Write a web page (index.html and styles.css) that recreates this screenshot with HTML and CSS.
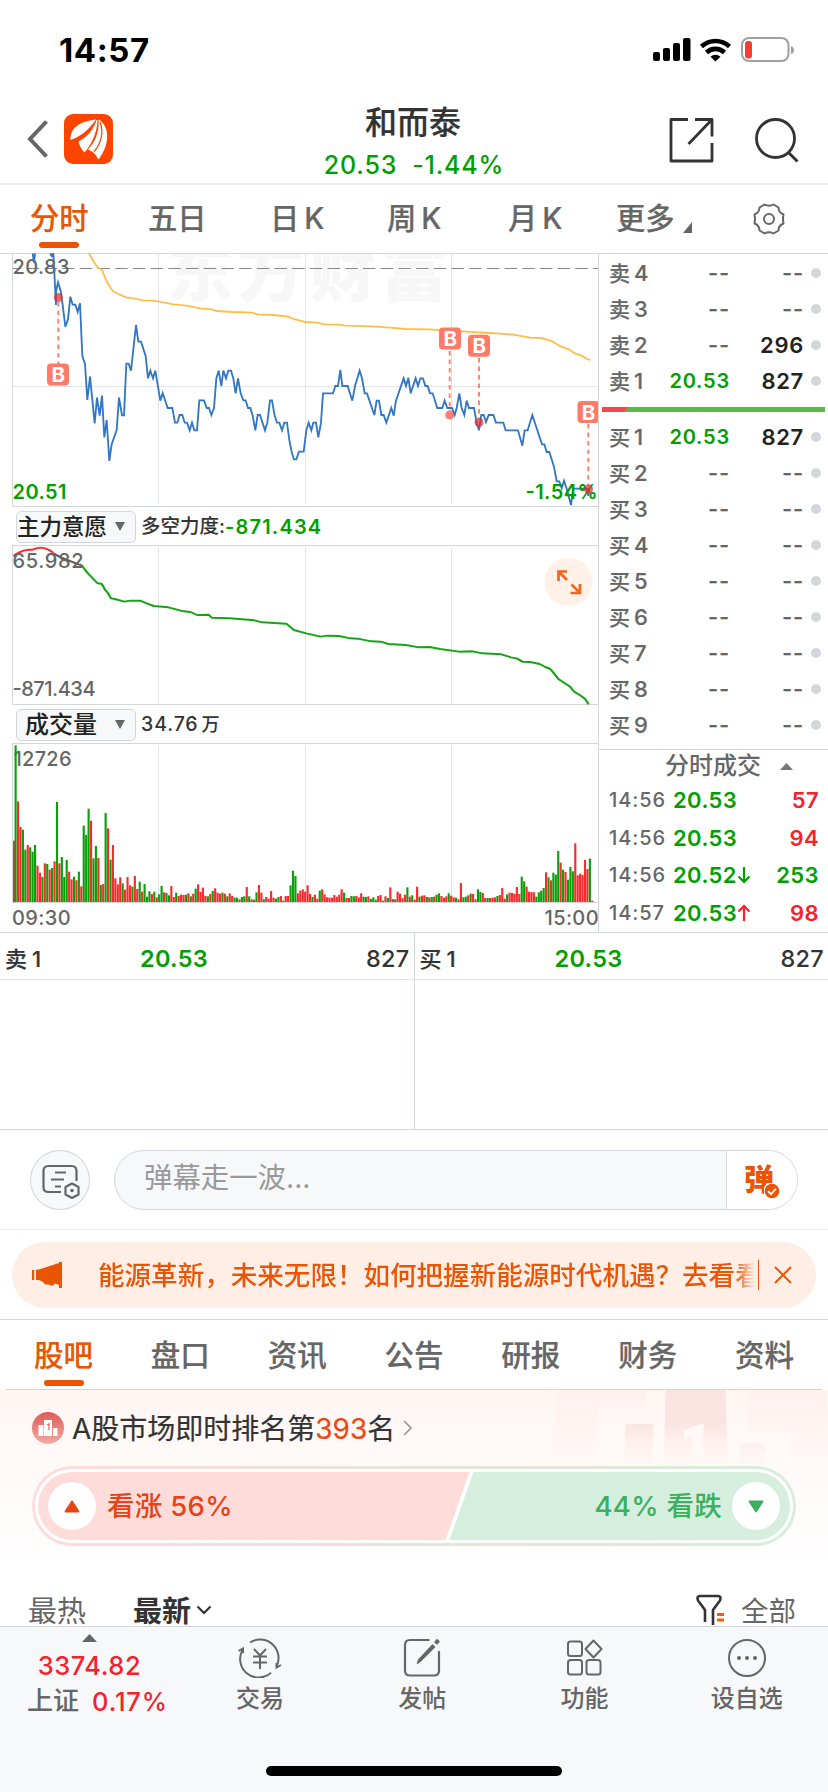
FILE: index.html
```html
<!DOCTYPE html>
<html lang="zh-CN">
<head>
<meta charset="utf-8">
<title>和而泰 20.53</title>
<link rel="stylesheet" href="styles.css">
</head>
<body>
<div class="status">
  <span class="clock">14:57</span>
  <svg class="status-icons" width="142" height="28" viewBox="652 36 142 28">
    <g fill="#000"><rect x="653" y="52" width="7" height="9" rx="2"/><rect x="663" y="48" width="7" height="13" rx="2"/><rect x="673" y="43" width="7" height="18" rx="2"/><rect x="683" y="38" width="7.500" height="23" rx="2"/></g>
    <g fill="none" stroke="#000" stroke-width="4.600"><path d="M701.500 46.500a20.500 20.500 0 0 1 28 0"/><path d="M706.500 52.500a13 13 0 0 1 18 0"/></g>
    <path d="M710.500 56.800a7.300 7.300 0 0 1 10 0L715.500 61.500z"/>
    <rect x="742" y="38" width="46.500" height="23" rx="7" fill="none" stroke="#a0a0a0" stroke-width="2"/>
    <rect x="745" y="41" width="7" height="17.500" rx="3" fill="#ff3b30"/>
    <path d="M791 46q3 1 3 4t-3 4z" fill="#a0a0a0"/>
  </svg>
</div>
<header class="header">
  <div class="side">
    <svg width="22" height="40" viewBox="0 0 22 40"><path d="M19.500 2.500L3 20l16.500 17.500" fill="none" stroke="#666" stroke-width="4"/></svg>
    <svg class="logo" width="49" height="50" viewBox="0 0 49 50"><rect width="49" height="50" rx="9" fill="#ff4400"/>
      <g fill="#fff"><path d="M6.500 26C6 15 14 7.500 32 5.500C27 12 21 21 6.500 26z"/><path d="M32.500 6C30 14 25 22 14.500 27.500C16 33 18 36 20.500 38.500C27 31 33 20 33.500 6z"/><path d="M34.500 5.500C35.500 18 31 28 24 35.500C30 38 32 41 34.500 45.500C45 32 47 14 35 5.500z"/></g>
      <path d="M36 8C40 18 37 30 30 37.500" fill="none" stroke="#ff4400" stroke-width="1.200"/>
    </svg>
  </div>
  <div class="stock">
    <div class="stock-name">和而泰</div>
    <div class="stock-quote"><span>20.53</span><span>-1.44%</span></div>
  </div>
  <div class="side tools">
    <svg width="46" height="48" viewBox="668 116 46 48"><path d="M688 119.500H671V161h41v-18M695 119.500h17v17M712 119.500L688.500 144" fill="none" stroke="#333" stroke-width="2.800" stroke-linejoin="round"/></svg>
    <svg width="46" height="48" viewBox="753 116 46 48"><circle cx="775.500" cy="138.500" r="19" fill="none" stroke="#333" stroke-width="2.800"/><path d="M788 152l9.500 9.500" stroke="#333" stroke-width="3"/></svg>
  </div>
</header>
<nav class="periods">
  <span class="on">分时</span><span>五日</span><span>日<i>K</i></span><span>周<i>K</i></span><span>月<i>K</i></span>
  <span class="more">更多<svg width="9" height="11" viewBox="0 0 9 11"><path d="M9 0v11H0z" fill="#666"/></svg></span>
  <svg class="gear" width="34" height="34" viewBox="-17 -17 34 34" fill="none" stroke="#666" stroke-width="2"><path d="M-4.500 -14.500Q0 -12 4.500 -14.500L9.500 -11.500Q9.500 -6.500 14.500 -4.500Q13.500 0 14.500 4.500Q9.500 6.500 9.500 11.500L4.500 14.500Q0 12 -4.500 14.500L-9.500 11.500Q-9.500 6.500 -14.500 4.500Q-13.500 0 -14.500 -4.500Q-9.500 -6.500 -9.500 -11.500z" stroke-linejoin="round"/><circle r="5"/></svg>
</nav>
<main class="board">
  <section class="charts">
    <svg class="price" width="599" height="254" viewBox="0 253 599 254">
      <text class="watermark" x="167" y="296" textLength="280">东方财富</text>
      <g stroke="#e3e4ea" stroke-width="1"><path d="M158.500 254V504M305.500 254V504M451.500 254V504M13 386.500H598"/></g>
      <path d="M0 253.500H599M12.500 253V506.500H598.500V253" fill="none" stroke="#d3d6db"/>
      <path d="M13 268.500H598" stroke="#888" stroke-dasharray="12.500 5.200" stroke-dashoffset="4"/>
      <text class="label" x="12.500" y="273.500" textLength="57">20.83</text>
      <g transform="translate(0 250) scale(.33333)" fill="none" stroke-linejoin="miter" stroke-width="5.500">
        <path stroke="#ffbe4a" d="M267 10L275 25 291 50 306 60 319 92 328 108 339 124 355 132 378 142 400 145 430 151 460 152 490 157 520 163 560 167 600 175 635 178 650 183 700 186 755 188 772 193 820 195 865 200 880 207 900 212 915 216 950 218 975 223 1020 224 1035 227 1115 229 1170 233 1215 237 1290 238 1345 243 1400 245 1470 249 1540 254 1590 263 1625 264 1655 273 1685 291 1705 297 1725 310 1745 317 1765 329 1772 329"/>
        <path stroke="#3277c4" d="M98 10L102 38 105 10M150 10L155 18 160 10 168 165 168 125 174 97 182 122 188 165 196 230 204 208 211 140 218 164 226 164 233 186 240 160 247 318 255 342 262 450 270 380 284 520 291 443 299 497 306 437 313 562 320 510 328 633 335 583 350 540 357 443 366 496 372 496 379 341 386 341 393 362 408 225 415 275 423 275 437 318 444 385 451 362 459 385 466 362 481 452 488 429 503 474 517 474 525 518 532 518 539 495 547 495 554 518 561 518 569 541 576 518 583 541 591 541 598 451 612 451 620 474 627 474 634 495 642 474 649 385 656 362 664 408 670 362 678 385 685 362 693 362 700 385 707 430 714 385 722 430 730 451 737 451 744 474 751 474 758 497 766 541 773 495 780 495 795 541 802 518 810 451 816 451 824 497 831 518 838 518 846 541 853 518 861 518 868 570 875 606 882 628 889 628 897 605 911 605 919 541 926 518 934 541 940 518 948 518 955 562 963 518 969 430 999 430 1006 408 1014 408 1021 360 1027 408 1043 408 1057 452 1065 408 1079 362 1086 385 1094 430 1101 430 1123 495 1130 452 1137 452 1144 495 1151 495 1159 518 1174 474 1181 497 1188 452 1211 385 1218 408 1225 383 1232 430 1247 385 1254 408 1261 385 1269 385 1276 408 1283 408 1290 430 1298 430 1312 474 1327 474 1334 452 1342 474 1356 474 1364 495 1370 474 1378 430 1385 474 1393 495 1400 452 1407 474 1422 474 1430 518 1437 541 1444 495 1451 495 1458 516 1466 495 1480 495 1488 518 1510 518 1517 541 1554 541 1567 587 1574 541 1583 541 1597 495 1612 541 1626 583 1633 583 1640 606 1648 606 1662 650 1670 694 1678 694 1685 715 1692 692 1700 716 1713 765 1720 716 1762 716 1765 738 1768 716"/>
      </g>
      <text class="label green" x="12.500" y="498.500" textLength="54">20.51</text>
      <text class="label green" x="525.500" y="498.500" textLength="72">-1.54%</text>
      <g stroke="#ff8370" stroke-width="2" stroke-dasharray="4.500 4"><path d="M58.300 302V364M449.700 351V411M479 358V419M588.300 424V486"/></g>
      <g fill="#e22a2a" fill-opacity=".7"><circle cx="58.300" cy="297.500" r="4.500"/><circle cx="449.700" cy="415" r="4.500" fill="#ff4c3c"/><circle cx="479" cy="422.500" r="4.500"/><circle cx="588.500" cy="489" r="4.500"/></g>
      <g class="flags"><rect x="47" y="363.500" width="22" height="22" rx="4"/><rect x="439" y="327.500" width="22" height="22" rx="4"/><rect x="468" y="334.700" width="22" height="22" rx="4"/><rect x="577.500" y="401" width="22" height="22" rx="4"/>
      <text x="58.200" y="382">B</text><text x="450.200" y="346">B</text><text x="479.200" y="353.200">B</text><text x="588.500" y="419.500">B</text></g>
    </svg>
    <div class="pick-row"><button class="pick">主力意愿<svg width="10" height="9" viewBox="0 0 10 9"><path d="M0 0H10L5 9z" fill="#666"/></svg></button><span>多空力度:</span><b>-871.434</b></div>
    <svg class="flow" width="599" height="160" viewBox="0 545 599 160">
      <path d="M158.500 548V704M305.500 548V704M451.500 548V704" stroke="#e3e4ea"/>
      <rect x="12.500" y="545.500" width="586" height="159" fill="none" stroke="#d3d6db"/>
      <g transform="translate(0 505) scale(.3827 .33333)" fill="none" stroke-width="5.800" stroke-linejoin="round">
        <path stroke="#555" d="M36 154L40 149M140 146L160 158 180 167 205 178 213 180"/>
        <path stroke="#f5282d" d="M38 150L50 142 62 137 75 134 85 134 95 130 105 128 118 130 130 136 140 144"/>
        <path stroke="#13a513" d="M213 180L228 203 254 234 266 237 275 255 282 264 290 280 300 282 325 290 340 287 366 287 385 296 402 303 440 307 480 319 498 321 515 330 545 329 553 338 600 340 665 346 685 352 748 356 768 375 800 385 838 395 855 392 886 393 915 400 935 401 970 409 995 410 1015 417 1060 420 1095 427 1122 426 1150 432 1200 440 1235 439 1260 445 1310 448 1335 457 1350 460 1365 470 1385 471 1410 477 1425 486 1438 492 1448 506 1460 523 1490 545 1500 560 1515 570 1530 583 1538 598"/>
      </g>
      <text class="label" x="12.500" y="567.500" textLength="71">65.982</text>
      <text class="label" x="12.500" y="695.500" textLength="83">-871.434</text>
      <circle cx="568.500" cy="582" r="24" fill="#fff0e8"/>
      <g fill="none" stroke="#f0651f" stroke-width="2.700"><path d="M558.500 581V571.500H567M559 572l8 8M580 584V593H570.500M579.500 592.500l-8-8"/></g>
    </svg>
    <div class="pick-row"><button class="pick vol">成交量<svg width="10" height="9" viewBox="0 0 10 9"><path d="M0 0H10L5 9z" fill="#666"/></svg></button><span class="volume-now">34.76<em>万</em></span></div>
    <svg class="volume" width="599" height="160" viewBox="0 743 599 160">
      <path d="M158.500 746V902M305.500 746V902M451.500 746V902" stroke="#e3e4ea"/>
      <rect x="12.500" y="743.500" width="586" height="159" fill="none" stroke="#d3d6db"/>
      <text class="label" x="13.500" y="765.500" textLength="58">12726</text>
      <g id="bars"></g>
    </svg>
    <div class="times"><span>09:30</span><span>15:00</span></div>
  </section>
  <aside class="book">
    <div class="level"><span>卖<i>4</i></span><u>--</u><u>--</u></div>
    <div class="level"><span>卖<i>3</i></span><u>--</u><u>--</u></div>
    <div class="level"><span>卖<i>2</i></span><u>--</u><b>296</b></div>
    <div class="level"><span>卖<i>1</i></span><em>20.53</em><b>827</b></div>
    <div class="ratio"></div>
    <div class="level"><span>买<i>1</i></span><em>20.53</em><b>827</b></div>
    <div class="level"><span>买<i>2</i></span><u>--</u><u>--</u></div>
    <div class="level"><span>买<i>3</i></span><u>--</u><u>--</u></div>
    <div class="level"><span>买<i>4</i></span><u>--</u><u>--</u></div>
    <div class="level"><span>买<i>5</i></span><u>--</u><u>--</u></div>
    <div class="level"><span>买<i>6</i></span><u>--</u><u>--</u></div>
    <div class="level"><span>买<i>7</i></span><u>--</u><u>--</u></div>
    <div class="level"><span>买<i>8</i></span><u>--</u><u>--</u></div>
    <div class="level"><span>买<i>9</i></span><u>--</u><u>--</u></div>
    <div class="ticks">
      <div class="ticks-title">分时成交<svg width="13" height="7" viewBox="0 0 13 7"><path d="M0 7L6.500 0L13 7z" fill="#75777d"/></svg></div>
      <div class="tick"><span>14:56</span><em>20.53</em><b class="red">57</b></div>
      <div class="tick"><span>14:56</span><em>20.53</em><b class="red">94</b></div>
      <div class="tick"><span>14:56</span><em>20.52<svg width="14" height="18" viewBox="0 0 14 18"><path d="M7 1V16M1.500 10.500L7 16l5.500-5.500" fill="none" stroke="#00a000" stroke-width="2.200"/></svg></em><b>253</b></div>
      <div class="tick"><span>14:57</span><em>20.53<svg width="14" height="18" viewBox="0 0 14 18"><path d="M7 17V2M1.500 7.500L7 2l5.500 5.500" fill="none" stroke="#f5222d" stroke-width="2.200"/></svg></em><b class="red">98</b></div>
    </div>
  </aside>
</main>
<section class="best">
  <div class="best-half"><div class="best-row"><span>卖<i>1</i></span><em>20.53</em><b>827</b></div></div>
  <div class="best-half"><div class="best-row"><span>买<i>1</i></span><em>20.53</em><b>827</b></div></div>
</section>
<section class="danmu">
  <div class="danmu-set"><svg width="60" height="60" viewBox="30 1150 60 60" fill="none" stroke="#666" stroke-width="2.200"><path d="M76.500 1181V1171q0-5-5-5H48.500q-5 0-5 5v16q0 5 5 5H61"/><path d="M55 1172.500H66M51 1179.500H64M55 1186.500H61"/><path d="M72 1183.500l6.500 3.500v7.500l-6.500 3.500-6.500-3.500v-7.500z" stroke-linejoin="round"/><circle cx="72" cy="1190.500" r="1.800" fill="#666" stroke="none"/></svg></div>
  <div class="danmu-box"><span>弹幕走一波...</span><div class="danmu-on">弹<svg width="16" height="16" viewBox="0 0 16 16"><circle cx="8" cy="8" r="8" fill="#ea5504" stroke="#fff" stroke-width="1.500"/><path d="M4 8.200l3 3 5-5.500" fill="none" stroke="#fff" stroke-width="1.800"/></svg></div></div>
</section>
<section class="notice">
  <div class="notice-bar">
    <svg width="32" height="28" viewBox="31 1261 32 28" fill="#ea5504"><path d="M32 1270h2.200v10H32zM36 1269.500h3L59 1263v-1h3v26h-3v-3l-4-1.500c-2 3-4 2.500-6.500 1l-3.500 0-2-2.500-4-2H36z"/></svg>
    <div class="notice-text">能源革新，未来无限！如何把握新能源时代机遇？去看看</div>
    <svg class="close" width="18" height="18" viewBox="0 0 18 18"><path d="M1 1L17 17M17 1L1 17" stroke="#ea5504" stroke-width="2"/></svg>
  </div>
</section>
<nav class="sections"><span class="on">股吧</span><span>盘口</span><span>资讯</span><span>公告</span><span>研报</span><span>财务</span><span>资料</span></nav>
<section class="rank">
  <svg class="podium" width="288" height="76" viewBox="540 1390 288 76">
    <defs><linearGradient id="fade" x1="0" y1="0" x2="0" y2="1"><stop offset=".4" stop-color="#fae3e0"/><stop offset="1" stop-color="#fff5f3" stop-opacity=".3"/></linearGradient><linearGradient id="soft" x1="0" y1="0" x2="0" y2="1"><stop stop-color="#fff0ee"/><stop offset="1" stop-color="#fff5f3" stop-opacity=".2"/></linearGradient></defs>
    <path d="M557 1390H645V1407H598L594 1466H552zM747 1390H824L828 1410V1466H790V1431H749z" fill="url(#soft)"/>
    <path d="M665.500 1390H725.500L728 1466H664zM625.500 1424H653.500L652.500 1466H624zM739.500 1443H764.500L766 1466H741z" fill="url(#fade)"/>
    <path d="M684.500 1430l17-6.500h2v33h-12v-19l-7 2z" fill="#fff8f7"/>
  </svg>
  <div class="rank-line">
    <svg width="32" height="32" viewBox="0 0 32 32"><defs><linearGradient id="med" x1="0" y1="0" x2="0" y2="1"><stop stop-color="#dd5c55"/><stop offset="1" stop-color="#f2aaa4"/></linearGradient></defs><circle cx="16" cy="16" r="16" fill="url(#med)"/><path d="M6.500 24V13h5v11zM12 24V8h8v16zM21 24V16h4.500v8z" fill="#fff"/><path d="M15 13l2-1.200V18" fill="none" stroke="#df6660" stroke-width="1.300"/></svg>
    <span>A股市场即时排名第<em>393</em>名</span>
    <svg width="9" height="16" viewBox="0 0 9 16"><path d="M1 1l7 7-7 7" fill="none" stroke="#999" stroke-width="1.700"/></svg>
  </div>
  <div class="vote">
    <div class="vote-in">
      <svg class="vote-bg" width="752" height="68" viewBox="0 0 752 68"><path d="M0 0H431.500L407.500 68H0z" fill="#fddcda"/><path d="M435.500 0H752V68H411.500z" fill="#d6eedd"/></svg>
      <div class="knob"><svg width="16" height="13" viewBox="0 0 16 13"><path d="M8 1.500L14.500 11.500H1.500z" fill="#e74314" stroke="#e74314" stroke-width="1.800" stroke-linejoin="round"/></svg></div>
      <span class="up">看涨 56%</span><span class="down">44% 看跌</span>
      <div class="knob"><svg width="16" height="13" viewBox="0 0 16 13"><path d="M8 11.500L14.500 1.500H1.500z" fill="#3bb060" stroke="#3bb060" stroke-width="1.800" stroke-linejoin="round"/></svg></div>
    </div>
  </div>
  <div class="sort">
    <span>最热</span><b>最新</b><svg width="16" height="10" viewBox="0 0 16 10"><path d="M1.500 1.500L8 8l6.500-6.500" fill="none" stroke="#333" stroke-width="2.200"/></svg>
    <svg class="filter" width="30" height="32" viewBox="0 0 30 32"><path d="M9 28V16L2 6.500Q0.500 2 4 2H22q3.500 0 2 4.500L17 16V31" fill="none" stroke="#333" stroke-width="2.600"/><path d="M21 20.500h7M21 26h7" stroke="#ff5a00" stroke-width="3"/></svg>
    <span>全部</span>
  </div>
</section>
<footer class="bar">
  <div class="index"><svg width="15" height="8" viewBox="0 0 15 8"><path d="M0 8L7.500 0L15 8z" fill="#666"/></svg><strong>3374.82</strong><div><span>上证</span><strong>0.17%</strong></div></div>
  <div class="item"><svg width="46" height="40" viewBox="-23 -20 46 40" fill="none" stroke="#666" stroke-width="2"><path d="M-10 -15.500A18.500 18.500 0 0 1 16.500 8.500M11 14.800A18.500 18.500 0 0 1 -17.500 -8"/><path d="M-21.500 -7L-17 -9.500V-5M21 7L16.500 9.500V5"/><path d="M-6 -9L0 -2.500L6 -9M0 -2.500V11M-7 -1.500H7M-7 4.500H7"/></svg>交易</div>
  <div class="item"><svg width="38" height="40" viewBox="-19 -20 38 40" fill="none" stroke="#666" stroke-width="2.200"><path d="M7.500 -18H-12q-5 0-5 5V12.500q0 5 5 5H12q5 0 5-5V-7"/><path d="M-5.500 6.500L-4 1.500L10.500 -14L13.500 -11L-1.500 4z" fill="#666" stroke="none"/><path d="M13.500 -14.500L16.500 -17.800" stroke-width="4"/></svg>发帖</div>
  <div class="item"><svg width="38" height="40" viewBox="-19 -20 38 40" fill="none" stroke="#666" stroke-width="2"><rect x="-17" y="-16.500" width="14" height="14.500" rx="2.500"/><rect x="-17" y="2" width="14" height="14.500" rx="2.500"/><rect x="1.500" y="2" width="14" height="14.500" rx="2.500"/><path d="M8.500 -17.500l8 8.500-8 8.500-8-8.500z" stroke-linejoin="round"/></svg>功能</div>
  <div class="item"><svg width="40" height="40" viewBox="-20 -20 40 40"><circle r="18" fill="none" stroke="#666" stroke-width="2"/><g fill="#666"><circle cx="-8" r="2"/><circle r="2"/><circle cx="8" r="2"/></g></svg>设自选</div>
  <div class="home"></div>
</footer>
<script src="bars.js"></script>
</body>
</html>
```

FILE: styles.css
```css
* { box-sizing: border-box; }
body { margin: 0; width: 828px; height: 1792px; overflow: hidden; display: flex; flex-direction: column; background: #fff; color: #666; font-family: Inter, "Noto Sans CJK SC", sans-serif; font-weight: 500; line-height: 1; }
i, em, u { font-style: normal; text-decoration: none; }
svg { display: block; flex: none; }
.green { fill: #00a000; }

.status { height: 96px; display: flex; justify-content: space-between; align-items: flex-start; padding: 34px 34px 0 59px; color: #000; }
.clock { font-size: 33px; font-weight: 700; letter-spacing: .6px; }
.status-icons { margin-top: 2px; }

.header { height: 89px; border-bottom: 2px solid #ebebeb; display: flex; justify-content: space-between; align-items: flex-start; padding: 0 29px 0 27px; }
.side { width: 200px; display: flex; align-items: center; gap: 15px; padding-top: 18px; }
.tools { justify-content: flex-end; gap: 39px; padding-top: 20px; }
.stock { text-align: center; padding-top: 11px; }
.stock-name { font-size: 32px; line-height: 32px; color: #333; -webkit-text-stroke: .2px; }
.stock-quote { display: flex; justify-content: center; gap: 15px; margin-top: 13px; padding-left: 2px; font-size: 25px; letter-spacing: .8px; line-height: 26px; color: #00a000; }

.periods { height: 68px; display: flex; align-items: flex-start; padding: 18px 42px 0 30px; font-size: 29.300px; line-height: 31px; -webkit-text-stroke: .2px; }
.periods > span { width: 119px; height: 47px; white-space: nowrap; }
.periods i { margin-left: 5px; }
.periods .on { color: #ea5504; width: 118px; }
.on::after { content: ""; display: block; width: 40px; height: 6px; border-radius: 3px; background: #ea5504; margin: 8px 0 0 9px; }
.periods > span:nth-child(3) { width: 116px; padding-left: 3px; }
.periods > span:nth-child(4) { width: 121px; padding-left: 4px; }
.periods > span:nth-child(5) { width: 109px; padding-left: 4px; }
.periods .more { display: flex; width: 86px; padding-left: 3px; gap: 8px; }
.more svg { margin-top: 19px; }
.gear { margin: -1px 0 0 auto; }

.board { display: flex; height: 680px; border-bottom: 1px solid #d3d6db; }
.charts { width: 599px; flex: none; display: flex; flex-direction: column; }
.watermark { font-size: 66px; font-weight: 900; fill: #f7f7f7; }
.label { font-size: 20px; font-weight: 550; fill: #666; }
.label.green { fill: #00a000; font-weight: 600; }
.flags rect { fill: #ff7a68; }
.flags text { fill: #fff; font-size: 20.500px; font-weight: 700; text-anchor: middle; }
.pick-row { height: 38px; display: flex; align-items: center; padding: 1px 0 0 16px; font-size: 19.500px; color: #333; }
.pick-row b { color: #00a000; font-weight: 570; font-size: 20px; letter-spacing: 1.200px; }
.pick { width: 120px; height: 32px; border: 1px solid #d3d6db; border-radius: 5px; background: #f7f8fa; font: 500 22.500px/28px Inter, "Noto Sans CJK SC", sans-serif; color: #222; padding: 0 10px 0 0; margin-right: 5px; display: flex; align-items: center; justify-content: space-between; white-space: nowrap; }
.pick.vol { padding-left: 8px; font-size: 24px; }
.volume-now { letter-spacing: .9px; font-weight: 550; }
.volume-now em { margin-left: 3px; font-size: 18px; }
.times { flex: 1; display: flex; justify-content: space-between; padding: 5px 0 0 12px; font-size: 20px; letter-spacing: .4px; }

.book { flex: 1; border: solid #d3d6db; border-width: 1px 0 0 0; padding-top: 1px; }
.charts + .book { box-shadow: -1px 0 0 #d3d6db; }
.level { height: 36px; display: flex; align-items: center; padding: 0 7px 0 10px; font-size: 22px; }
.level span { width: 50px; font-size: 21px; -webkit-text-stroke: .2px; }
.level i { font-size: 22px; margin-left: 4px; }
.level em, .level > :nth-child(2) { width: 71px; text-align: right; }
.level em { color: #00a000; font-size: 20px; letter-spacing: .8px; font-weight: 600; }
.level u { letter-spacing: .8px; font-weight: 600; }
.level > :nth-child(3) { flex: 1; text-align: right; }
.level b { font-weight: 570; color: #222; letter-spacing: .7px; }
.level::after { content: ""; width: 10px; height: 10px; border-radius: 5px; background: #d3d6db; margin-left: 7px; }
.ratio { height: 5px; margin: 8px 3px 7px; background: linear-gradient(135deg, #ef4b4b 19px, #5cb946 19px); }
.ticks { border-top: 1px solid #d3d6db; margin-top: 6px; }
.ticks-title { height: 31px; display: flex; align-items: center; padding: 1px 0 0 66px; gap: 19px; font-size: 24px; }
.tick { height: 37.800px; display: flex; align-items: center; padding: 0 9px 0 10px; }
.tick span { width: 64px; font-size: 20px; letter-spacing: .9px; }
.tick em, .tick b { font-size: 22px; color: #00a000; font-weight: 570; letter-spacing: .4px; }
.tick em { display: flex; align-items: center; }
.tick b { margin-left: auto; }
.tick .red { color: #f5222d; }

.best { height: 197px; display: flex; border-bottom: 1px solid #d3d6db; }
.best-half { flex: 1; }
.best-half + .best-half { border-left: 1px solid #d3d6db; }
.best-row { height: 47px; border-bottom: 1px solid #e3e4ea; display: flex; align-items: center; padding: 6px 4px 0 5px; font-size: 23.500px; color: #333; }
.best-row i { margin-left: 5px; }
.best-row span { width: 135px; font-size: 22px; -webkit-text-stroke: .2px; }
.best-row em { color: #00a000; font-weight: 570; letter-spacing: .3px; }
.best-row b { margin-left: auto; font-weight: 550; letter-spacing: .3px; }

.danmu { height: 100px; border-bottom: 1px solid #ebebeb; display: flex; padding: 20px 30px 0; gap: 24px; }
.danmu-set { width: 60px; height: 60px; border-radius: 30px; background: #f7f8fa; box-shadow: inset 0 0 0 1px #d3d6db; }
.danmu-box { flex: 1; height: 60px; border: 1px solid #d3d6db; border-radius: 30px; background: #f7f8fa; overflow: hidden; display: flex; justify-content: space-between; font-size: 28.400px; font-weight: 400; color: #999; padding-left: 29px; line-height: 54px; }
.danmu-on { position: relative; width: 71px; border-left: 1px solid #d3d6db; background: #fff; color: #ea5504; font-weight: 900; font-size: 30px; line-height: 56px; padding-left: 17px; }
.danmu-on svg { position: absolute; left: 37px; top: 32px; }

.notice { height: 90px; padding: 12px; border-bottom: 1px solid #d3d6db; }
.notice-bar { height: 66px; border-radius: 33px; background: #feeee6; display: flex; align-items: center; padding: 0 24px 0 19px; }
.notice-text { width: 661px; height: 30px; margin-left: 35px; line-height: 30px; font-size: 26.550px; white-space: nowrap; overflow: hidden; color: #ea5504; border-right: 1px solid #ea5504; background: linear-gradient(90deg, #ea5504 637px, #feeee6 657px); -webkit-background-clip: text; background-clip: text; -webkit-text-fill-color: transparent; }
.close { margin-left: auto; }

.sections { height: 70px; margin: 0 6px; padding: 20px 28px 0; border-bottom: 1px solid #d3d6db; display: flex; justify-content: space-between; font-size: 29.500px; line-height: 31px; -webkit-text-stroke: .2px; }
.sections .on { color: #ea5504; }
.sections .on::after { margin: 9px 0 0 10px; }

.rank { position: relative; height: 236px; background: linear-gradient(#fff6f4, #fff 180px); padding: 0 32px; }
.podium { position: absolute; right: 0; top: 0; }
.rank-line { position: relative; height: 76px; display: flex; align-items: center; gap: 8px; font-size: 28px; color: #333; font-weight: 400; -webkit-text-stroke: .2px; }
.rank-line > span { padding-top: 1px; }
.rank-line em { color: #ea4a12; }
.vote { position: relative; height: 80px; border-radius: 40px; padding: 3px; background: linear-gradient(90deg, #fddcda, #d6eedd); }
.vote-in { position: relative; height: 74px; border-radius: 37px; border: 3px solid #fff; overflow: hidden; background: #fff; display: flex; align-items: center; padding: 0 10px; font-size: 27.500px; }
.vote-bg { position: absolute; left: 0; top: 0; }
.knob { position: relative; width: 48px; height: 48px; border-radius: 24px; background: #fff; display: flex; align-items: center; justify-content: center; }
.up { position: relative; margin-left: 11px; padding-top: 2px; color: #e74314; letter-spacing: .3px; }
.down { position: relative; margin: 0 10px 0 auto; padding-top: 2px; color: #3bb060; letter-spacing: .3px; }
.sort { height: 80px; display: flex; align-items: flex-end; margin-left: -4px; font-size: 29px; line-height: 31px; font-weight: 400; }
.sort span, .sort b { position: relative; top: 1px; }
.sort b { margin: 0 5px 0 47px; color: #333; }
.sort svg { margin-bottom: 11px; }
.sort .filter { margin: 0 15px 0 auto; }
.sort > span:last-child { font-size: 27.500px; }

.bar { position: relative; height: 166px; border-top: 1px solid #d3d6db; background: #f7f8fa; display: flex; font-size: 24px; }
.index { width: 179px; padding-top: 7px; display: flex; flex-direction: column; align-items: center; }
.index strong { font-weight: 550; color: #f5222d; font-size: 25.500px; letter-spacing: .5px; }
.index > strong { margin: 11px 0 9px; }
.index div { display: flex; gap: 13px; margin-left: 16px; white-space: nowrap; }
.index div span { font-size: 26px; }
.index div strong { padding-top: 1px; letter-spacing: .8px; }
.item { width: 162.400px; display: flex; flex-direction: column; align-items: center; padding-top: 11px; gap: 9px; }
.home { position: absolute; left: 266px; top: 139px; width: 296px; height: 10px; border-radius: 5px; background: #000; }
```

FILE: bars.js
```js
// Volume per minute: positive = up (red), negative = down (green)
const volumes = [184,-470,302,225,-217,-157,171,-164,-151,-171,109,88,-75,116,-114,97,-102,122,-300,116,-135,-75,-126,91,68,-76,65,-91,47,-229,-201,-280,244,-131,-168,132,-51,54,-267,221,-127,171,71,53,74,-56,37,75,50,-46,78,39,-61,31,-54,-16,-32,24,-31,14,-23,-48,29,-27,-20,48,15,-28,18,22,21,-22,26,-17,25,-40,53,31,43,18,-17,24,-33,41,28,25,-28,25,-17,26,18,-13,-13,8,-15,-17,45,-17,8,-7,-29,51,28,-8,15,10,33,13,-10,-15,18,-4,18,18,-50,-94,-78,26,34,38,31,50,24,-15,22,10,-34,38,23,14,13,13,21,16,22,38,-28,12,12,-18,-17,18,14,26,-16,-15,17,-9,-14,-7,18,21,-4,17,-12,44,9,-8,31,25,11,22,-44,16,-20,7,46,-16,19,20,-15,14,-15,16,-22,-26,18,13,17,-26,19,14,-13,8,57,-14,-16,20,-25,24,8,-38,-30,27,12,-12,12,13,14,-18,21,42,10,-23,28,27,25,45,24,-76,-62,46,31,30,29,-16,-29,-34,-42,89,-74,65,-88,-82,-153,118,-97,90,-67,-105,-92,176,80,85,81,126,99,-130,4];
const group = document.getElementById("bars");
volumes.forEach((v, i) => {
  const bar = document.createElementNS("http://www.w3.org/2000/svg", "rect");
  const h = Math.abs(v) / 3;
  bar.setAttribute("x", Math.max(13, 12.1 + i * 2.4333));
  bar.setAttribute("y", 902 - h);
  bar.setAttribute("width", 2.15);
  bar.setAttribute("height", h);
  bar.setAttribute("fill", v > 0 ? "#fa2a2d" : "#0aa00a");
  group.appendChild(bar);
});
```
